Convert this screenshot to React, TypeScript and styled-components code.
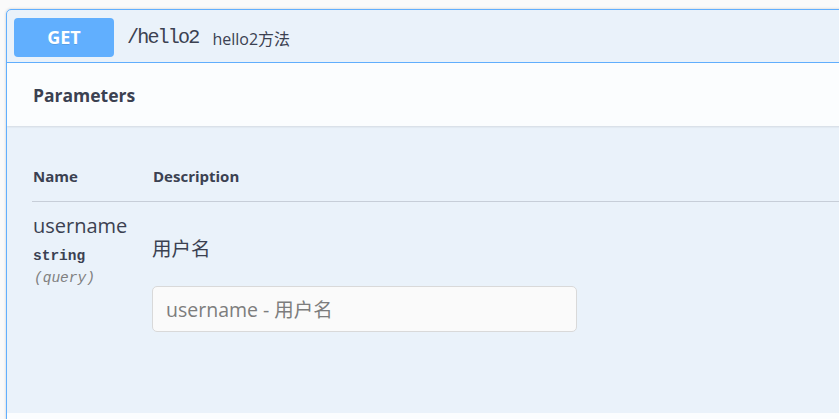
import React from "react";
import styled, { createGlobalStyle } from "styled-components";

const Global = createGlobalStyle`
  html, body { margin: 0; padding: 0; background: #fafafa; }
  body { overflow: hidden; font-family: "Open Sans", "Noto Sans CJK SC", sans-serif; color: #3b4151; }
`;

const Page = styled.div`
  padding: 9px 0 0 6px;
  width: 100vw;
  height: 419px;
  box-sizing: border-box;
  overflow: hidden;
`;

const OpBlock = styled.div`
  width: 860px;
  border: 1px solid #61affe;
  border-radius: 5px;
  background: rgba(97, 175, 254, 0.1);
  box-shadow: 0 0 3px rgba(0, 0, 0, 0.19);
  height: 440px;
  overflow: hidden;
`;

const Summary = styled.div`
  display: flex;
  align-items: center;
  height: 52px;
  padding: 0 7px;
  border-bottom: 1px solid #61affe;
  box-sizing: content-box;
`;

const Method = styled.div`
  width: 100px;
  height: 39px;
  margin-top: 2px;
  border-radius: 4px;
  background: #61affe;
  color: #fff;
  font-family: "Open Sans", sans-serif;
  font-weight: 700;
  font-size: 18px;
  display: flex;
  align-items: center;
  justify-content: center;
  text-shadow: 0 1px 0 rgba(0, 0, 0, 0.1);
`;

const Path = styled.span`
  margin-left: 13px;
  font-family: "Liberation Mono", monospace;
  font-size: 20px;
  letter-spacing: -1.8px;
  font-weight: 400;
  color: #3b4151;
  margin-top: 2px;
`;

const Desc = styled.span`
  margin-left: 14px;
  font-size: 16px;
  color: #3b4151;
  margin-top: 3px;
`;

const SectionHeader = styled.div`
  height: 63px;
  display: flex;
  align-items: center;
  padding-left: 26px;
  background: rgba(255, 255, 255, 0.8);
  box-shadow: 0 1px 2px rgba(0, 0, 0, 0.1);
  position: relative;
`;

const SectionTitle = styled.h4`
  margin: 0;
  font-size: 17.5px;
  font-weight: 700;
  color: #3b4151;
`;

const TableContainer = styled.div`
  padding: 25px 0 0 25px;
  height: 287px;
  box-sizing: border-box;
`;

const Grid = styled.div`
  display: grid;
  grid-template-columns: 120px 1fr;
`;

const HeadCell = styled.div`
  height: 50px;
  display: flex;
  align-items: center;
  padding-left: 1px;
  font-size: 15px;
  font-weight: 700;
  color: #3b4151;
  border-bottom: 1px solid rgba(59, 65, 81, 0.2);
`;

const NameCell = styled.div`
  padding: 11px 0 0 1px;
  display: flex;
  flex-direction: column;
`;

const ParamName = styled.div`
  font-size: 20px;
  line-height: 26px;
  color: #3b4151;
`;

const ParamType = styled.div`
  font-family: "Liberation Mono", monospace;
  font-size: 14.5px;
  font-weight: 700;
  line-height: 22px;
  margin-top: 6px;
  color: #3b4151;
`;

const ParamIn = styled.div`
  font-family: "Liberation Mono", monospace;
  font-size: 14.5px;
  font-style: italic;
  line-height: 22px;
  color: #808080;
  padding-left: 1px;
`;

const DescCell = styled.div`
  padding-top: 31px;
`;

const DescText = styled.p`
  margin: 0 0 23px 0;
  font-family: "Noto Sans CJK SC", sans-serif;
  font-size: 19.5px;
  line-height: 30px;
  color: #3b4151;
`;

const Input = styled.input`
  width: 425px;
  height: 46px;
  box-sizing: border-box;
  border: 1px solid #d9d9d9;
  border-radius: 5px;
  background: #fafafa;
  padding: 0 13px;
  font-family: "Open Sans", "Noto Sans CJK SC", sans-serif;
  font-size: 19.5px;
  color: #3b4151;
  outline: none;
  &::placeholder { color: #7d7d7d; }
`;

const NextSection = styled.div`
  height: 60px;
  background: rgba(255, 255, 255, 0.8);
`;

export default function App() {
  return (
    <>
      <Global />
      <Page>
        <OpBlock>
          <Summary>
            <Method>GET</Method>
            <Path>/hello2</Path>
            <Desc>hello2方法</Desc>
          </Summary>
          <SectionHeader>
            <SectionTitle>Parameters</SectionTitle>
          </SectionHeader>
          <TableContainer>
            <Grid>
              <HeadCell>Name</HeadCell>
              <HeadCell>Description</HeadCell>
              <NameCell>
                <ParamName>username</ParamName>
                <ParamType>string</ParamType>
                <ParamIn>(query)</ParamIn>
              </NameCell>
              <DescCell>
                <DescText>用户名</DescText>
                <Input placeholder="username - 用户名" />
              </DescCell>
            </Grid>
          </TableContainer>
          <NextSection />
        </OpBlock>
      </Page>
    </>
  );
}
